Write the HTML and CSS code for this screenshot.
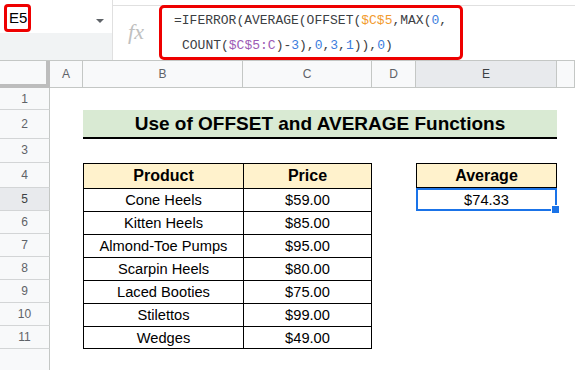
FILE: index.html
```html
<!DOCTYPE html>
<html lang="en">
<head>
  <meta charset="UTF-8">
  <meta name="viewport" content="width=device-width, initial-scale=1.0">
  <title>Use of OFFSET and AVERAGE Functions</title>
  <link rel="stylesheet" href="styles.css">
</head>
<body>
  <div class="topbar">
    <div class="namebox">
      <div class="namebox-field">
        <span class="cell-ref">E5</span>
        <span class="caret"></span>
      </div>
    </div>
    <div class="formula-area">
      <div class="fx">fx</div>
      <div class="formula">
        <div class="formula-line">=IFERROR(AVERAGE(OFFSET(<span class="ref-a">$C$5</span>,MAX(<span class="num">0</span>,</div>
        <div class="formula-line indent">COUNT(<span class="ref-b">$C$5:C</span>)-<span class="num">3</span>),<span class="num">0</span>,<span class="num">3</span>,<span class="num">1</span>)),<span class="num">0</span>)</div>
      </div>
    </div>
  </div>

  <div class="sheet-head">
    <div class="corner"></div>
    <div class="col-head">A</div>
    <div class="col-head">B</div>
    <div class="col-head">C</div>
    <div class="col-head">D</div>
    <div class="col-head active">E</div>
    <div class="col-head"></div>
  </div>

  <div class="sheet-body">
    <div class="row-heads">
      <div class="row-head first">1</div>
      <div class="row-head tall">2</div>
      <div class="row-head gap">3</div>
      <div class="row-head head">4</div>
      <div class="row-head active">5</div>
      <div class="row-head">6</div>
      <div class="row-head">7</div>
      <div class="row-head">8</div>
      <div class="row-head">9</div>
      <div class="row-head">10</div>
      <div class="row-head">11</div>
      <div class="row-head rest"></div>
    </div>

    <div class="cells">
      <div class="title">Use of OFFSET and AVERAGE Functions</div>

      <div class="products">
        <div class="th">Product</div>
        <div class="th">Price</div>
        <div class="td">Cone Heels</div>
        <div class="td">$59.00</div>
        <div class="td">Kitten Heels</div>
        <div class="td">$85.00</div>
        <div class="td">Almond-Toe Pumps</div>
        <div class="td">$95.00</div>
        <div class="td">Scarpin Heels</div>
        <div class="td">$80.00</div>
        <div class="td">Laced Booties</div>
        <div class="td">$75.00</div>
        <div class="td">Stilettos</div>
        <div class="td">$99.00</div>
        <div class="td">Wedges</div>
        <div class="td">$49.00</div>
      </div>

      <div class="avg-head">Average</div>
      <div class="avg-value">$74.33</div>
    </div>
  </div>
</body>
</html>
```

FILE: styles.css
```css
* {
  box-sizing: border-box;
}

body {
  margin: 0;
  width: 575px;
  height: 370px;
  overflow: hidden;
  background-color: #fff;
  font-family: "Liberation Sans", Arial, sans-serif;
  color: #000;
}

/* Barra superior: cuadro de nombre y barra de fórmulas */
.topbar {
  display: flex;
  height: 61px;
  border-bottom: 1px solid #c4c7c5;
}

.namebox {
  width: 113px;
  background-color: #f1f3f4;
  border-right: 1px solid #e0e0e0;
}

.namebox-field {
  display: flex;
  align-items: flex-start;
  justify-content: space-between;
  height: 33px;
  padding: 4px 8px 0 4px;
  background-color: #fff;
}

.cell-ref {
  width: 27px;
  height: 28px;
  border: 3px solid #ee0000;
  border-radius: 4px;
  font-size: 15px;
  line-height: 22px;
  padding-left: 2px;
}

.caret {
  margin-top: 15px;
  width: 0;
  height: 0;
  border-left: 4px solid transparent;
  border-right: 4px solid transparent;
  border-top: 4px solid #5f6368;
}

.formula-area {
  flex: 1;
  display: flex;
  margin-top: 5px;
  border-top: 1px solid #e0e0e0;
}

.fx {
  width: 46px;
  text-align: center;
  font-family: "Liberation Serif", serif;
  font-style: italic;
  font-size: 22px;
  line-height: 52px;
  color: #c0c0c0;
}

.formula {
  width: 304px;
  height: 55px;
  margin-top: -1px;
  border: 3px solid #ee0000;
  border-radius: 5px;
  padding-left: 12px;
  font-family: "Liberation Mono", monospace;
  font-size: 13px;
  line-height: 25px;
  color: #3c4043;
}

.formula-line.indent {
  padding-left: 8px;
}

.ref-a {
  color: #f29b2e;
}

.ref-b {
  color: #9c5bb5;
}

.num {
  color: #3b7ddd;
}

/* Encabezados de columnas */
.sheet-head {
  display: grid;
  grid-template-columns: 50px 33px 160px 129px 44px 141px 1fr;
  height: 27px;
}

.corner {
  background-color: #f8f9fa;
  border-right: 4px solid #bdbdbd;
  border-bottom: 4px solid #bdbdbd;
}

.col-head {
  background-color: #f8f9fa;
  border-right: 1px solid #c4c7c5;
  border-bottom: 1px solid #c4c7c5;
  text-align: center;
  font-size: 12px;
  line-height: 26px;
  color: #5f6368;
}

.col-head.active {
  background-color: #e8eaed;
  color: #3c4043;
}

/* Cuerpo de la hoja */
.sheet-body {
  display: flex;
  height: 282px;
}

.row-heads {
  display: flex;
  flex-direction: column;
  width: 50px;
}

.row-head {
  height: 23px;
  background-color: #f8f9fa;
  border-right: 1px solid #c4c7c5;
  border-bottom: 1px solid #d3d5d6;
  text-align: center;
  font-size: 12px;
  line-height: 22px;
  color: #5f6368;
}

.row-head.first { height: 22px; }
.row-head.tall { height: 29px; line-height: 28px; }
.row-head.gap { height: 24px; line-height: 23px; }
.row-head.head { height: 25px; line-height: 24px; }
.row-head.rest { flex: 1; border-bottom: none; }

.row-head.active {
  background-color: #e8eaed;
  color: #3c4043;
}

.cells {
  flex: 1;
  display: grid;
  grid-template-columns: 33px 160px 129px 44px 141px 1fr;
  grid-template-rows: 22px 29px 24px 25px repeat(7, 23px) 1fr;
}

.title {
  grid-column: 2 / 6;
  grid-row: 2;
  background-color: #d9ead3;
  border-bottom: 2px solid #000;
  text-align: center;
  font-weight: bold;
  font-size: 19px;
  line-height: 27px;
}

.products {
  grid-column: 2 / 4;
  grid-row: 4 / 12;
  display: grid;
  grid-template-columns: 159px 1fr;
  grid-template-rows: 24px repeat(6, 22px) 1fr;
  gap: 1px;
  background-color: #000;
  border: 1px solid #000;
}

.th,
.td {
  display: flex;
  align-items: center;
  justify-content: center;
  background-color: #fff;
  font-size: 14.67px;
}

.th {
  background-color: #fff2cc;
  font-weight: bold;
  font-size: 16px;
}

.avg-head {
  grid-column: 5;
  grid-row: 4;
  display: flex;
  align-items: center;
  justify-content: center;
  background-color: #fff2cc;
  border: 1px solid #000;
  font-weight: bold;
  font-size: 16px;
}

.avg-value {
  grid-column: 5;
  grid-row: 5;
  position: relative;
  display: flex;
  align-items: center;
  justify-content: center;
  border: 2px solid #1a73e8;
  font-size: 14.67px;
}

.avg-value::after {
  content: "";
  position: absolute;
  right: -5px;
  bottom: -5px;
  width: 7px;
  height: 7px;
  background-color: #1a73e8;
  border: 1px solid #fff;
}
```
